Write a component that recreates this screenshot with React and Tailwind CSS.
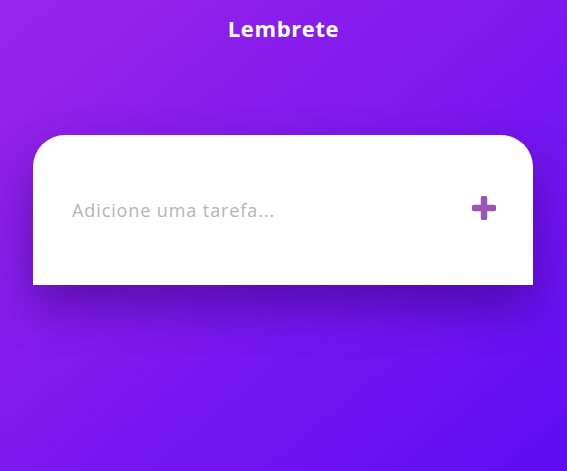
import React from 'react';

export default function App() {
  return (
    <div className="min-h-screen w-full bg-[linear-gradient(to_bottom_right,#9b24e9,#5e0cf4)] flex flex-col items-center font-['Open_Sans','Inter',sans-serif]">
      {/* Header */}
      <h1 className="mt-[13px] text-[22px] leading-[30px] font-bold tracking-[0.6px] text-white">Lembrete</h1>

      {/* Task input card */}
      <div className="self-start ml-[33px] mt-[92px] w-[500px] h-[150px] bg-white rounded-t-[32px] shadow-[0_22px_45px_rgba(40,0,90,0.45)] flex items-center pl-[39px] pr-[37px]">
        <input
          type="text"
          placeholder="Adicione uma tarefa..."
          className="flex-1 outline-none bg-transparent text-[18px] tracking-[0.9px] text-gray-700 placeholder:text-[#b5b5b5]"
        />
        <button className="mb-[4px] w-[24px] h-[24px] flex items-center justify-center">
          <svg width="24" height="24" viewBox="0 0 24 24">
            <path d="M12 2.5v19M2.5 12h19" stroke="#9b55b5" strokeWidth="6.5" strokeLinecap="round" />
          </svg>
        </button>
      </div>
    </div>
  );
}
